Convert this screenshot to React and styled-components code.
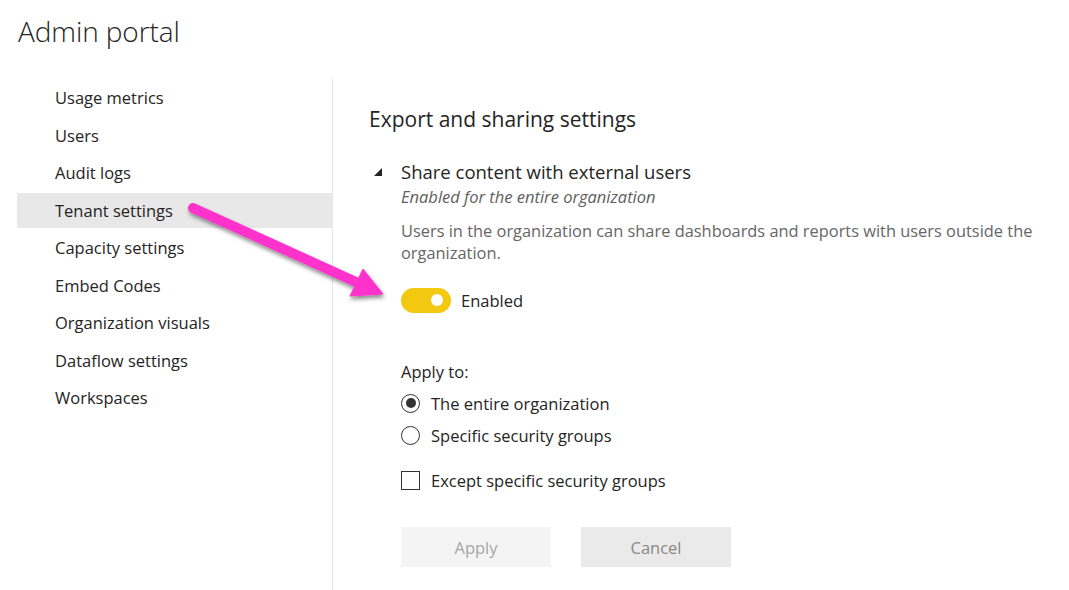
import React from "react";
import styled, { createGlobalStyle } from "styled-components";

const Global = createGlobalStyle`
  html, body { margin: 0; padding: 0; background: #ffffff; }
  body { font-family: "Open Sans", "Noto Sans", sans-serif; color: #252423; }
  * { box-sizing: border-box; }
`;

const Page = styled.div`
  position: relative;
  width: 1069px;
  height: 590px;
  overflow: hidden;
  background: #fff;
`;

const Title = styled.h1`
  margin: 0;
  padding: 13px 0 0 18px;
  font-size: 28px;
  font-weight: 300;
  line-height: 36px;
  color: #252423;
  letter-spacing: -0.1px;
`;

const Body = styled.div`
  display: flex;
  margin-top: 30px;
  height: 511px;
`;

const Sidebar = styled.nav`
  width: 316px;
  margin-left: 17px;
  border-right: 1px solid #e6e6e6;
  padding-top: 1px;
  display: flex;
  flex-direction: column;
  gap: 2.5px;
`;

const NavItem = styled.div`
  height: 35px;
  display: flex;
  align-items: center;
  padding-left: 38px;
  font-size: 16.5px;
  color: #252423;
  background: ${(p) => (p.$active ? "#e8e8e8" : "transparent")};
`;

const Content = styled.section`
  flex: 1;
  padding: 26px 0 0 36px;
`;

const SectionTitle = styled.h2`
  margin: 0;
  font-size: 21px;
  font-weight: 400;
  line-height: 28px;
  color: #252423;
`;

const SettingHeader = styled.div`
  display: flex;
  align-items: center;
  margin-top: 27px;
`;

const Caret = styled.span`
  width: 32px;
  display: flex;
  align-items: center;
  padding-left: 4px;
`;

const SettingName = styled.div`
  font-size: 18.5px;
  line-height: 24px;
  color: #252423;
`;

const Indented = styled.div`
  padding-left: 32px;
`;

const Status = styled.div`
  font-size: 16.5px;
  font-style: italic;
  line-height: 22px;
  color: #605e5c;
  margin-top: 2px;
`;

const Description = styled.p`
  margin: 12px 0 0;
  font-size: 16.4px;
  line-height: 22px;
  color: #666666;
  max-width: 660px;
`;

const ToggleRow = styled.div`
  display: flex;
  align-items: center;
  gap: 10px;
  margin-top: 23.5px;
`;

const Toggle = styled.div`
  position: relative;
  width: 50px;
  height: 25px;
  border-radius: 13px;
  background: #f2c811;
  &::after {
    content: "";
    position: absolute;
    width: 12px;
    height: 12px;
    border-radius: 50%;
    background: #fff;
    right: 8px;
    top: 6.5px;
  }
`;

const Label = styled.span`
  font-size: 16.5px;
  color: #252423;
`;

const ApplyTo = styled.div`
  margin: 47.5px 0 3px;
  font-size: 16.5px;
  line-height: 24px;
  color: #252423;
`;

const OptionRow = styled.label`
  display: flex;
  align-items: center;
  gap: 11px;
  height: 32px;
  margin-top: ${(p) => p.$mt || 0}px;
  font-size: 16.5px;
  color: #252423;
`;

const Radio = styled.span`
  width: 19px;
  height: 19px;
  border-radius: 50%;
  border: 1px solid #333;
  display: flex;
  align-items: center;
  justify-content: center;
  &::after {
    content: "";
    width: 10px;
    height: 10px;
    border-radius: 50%;
    background: ${(p) => (p.$checked ? "#333" : "transparent")};
  }
`;

const Check = styled.span`
  width: 19px;
  height: 19px;
  border: 1px solid #333;
`;

const Buttons = styled.div`
  display: flex;
  gap: 30px;
  margin-top: 31px;
`;

const Button = styled.button`
  width: 150px;
  height: 40px;
  border: none;
  font-family: inherit;
  font-size: 16.5px;
  color: ${(p) => (p.$primary ? "#a6a6a6" : "#8a8886")};
  background: ${(p) => (p.$primary ? "#f4f4f4" : "#eaeaea")};
`;

const ArrowLayer = styled.svg`
  position: absolute;
  left: 0;
  top: 0;
  pointer-events: none;
`;

const navItems = [
  "Usage metrics",
  "Users",
  "Audit logs",
  "Tenant settings",
  "Capacity settings",
  "Embed Codes",
  "Organization visuals",
  "Dataflow settings",
  "Workspaces",
];

export default function App() {
  return (
    <Page>
      <Global />
      <Title>Admin portal</Title>
      <Body>
        <Sidebar>
          {navItems.map((n) => (
            <NavItem key={n} $active={n === "Tenant settings"}>
              {n}
            </NavItem>
          ))}
        </Sidebar>
        <Content>
          <SectionTitle>Export and sharing settings</SectionTitle>
          <SettingHeader>
            <Caret>
              <svg width="10" height="10" viewBox="0 0 10 10">
                <polygon points="9,1 9,9 1,9" fill="#252423" />
              </svg>
            </Caret>
            <SettingName>Share content with external users</SettingName>
          </SettingHeader>
          <Indented>
            <Status>Enabled for the entire organization</Status>
            <Description>
              Users in the organization can share dashboards and reports with users outside the
              organization.
            </Description>
            <ToggleRow>
              <Toggle />
              <Label>Enabled</Label>
            </ToggleRow>
            <ApplyTo>Apply to:</ApplyTo>
            <OptionRow>
              <Radio $checked />
              The entire organization
            </OptionRow>
            <OptionRow>
              <Radio />
              Specific security groups
            </OptionRow>
            <OptionRow $mt={13}>
              <Check />
              Except specific security groups
            </OptionRow>
            <Buttons>
              <Button $primary>Apply</Button>
              <Button>Cancel</Button>
            </Buttons>
          </Indented>
        </Content>
      </Body>
      <ArrowLayer width="1069" height="590" viewBox="0 0 1069 590">
        <defs>
          <filter id="sh" x="-20%" y="-20%" width="140%" height="160%">
            <feDropShadow dx="1" dy="3" stdDeviation="2" floodColor="#000" floodOpacity="0.45" />
          </filter>
        </defs>
        <g filter="url(#sh)" fill="#ff33cc" stroke="#ff33cc">
          <line x1="193" y1="208" x2="356" y2="282" strokeWidth="10" strokeLinecap="round" />
          <polygon points="350,296 363,269 383,294" strokeWidth="1" strokeLinejoin="round" />
        </g>
      </ArrowLayer>
    </Page>
  );
}
